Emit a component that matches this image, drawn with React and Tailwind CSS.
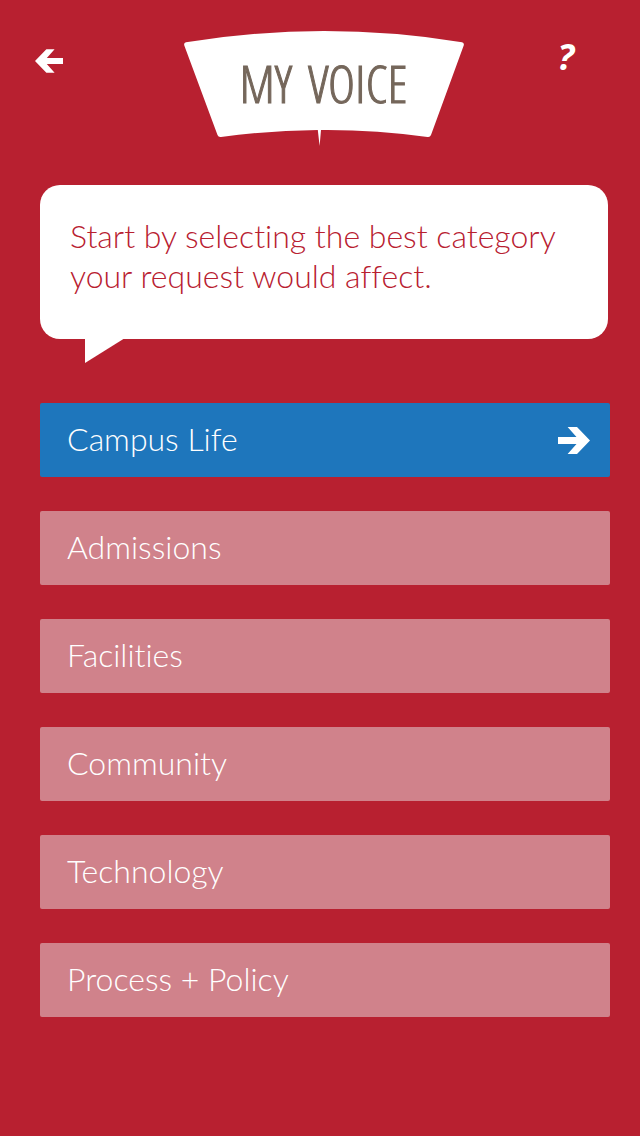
import React, { useState } from "react";

const categories = [
  "Campus Life",
  "Admissions",
  "Facilities",
  "Community",
  "Technology",
  "Process + Policy",
];

function Arrow({ className }) {
  return (
    <svg viewBox="0 0 32 27" className={className} fill="currentColor" aria-hidden="true">
      <path d="M0 10H18.500L9.6 0H19L32 13.5L19 27H9.6L18.500 17H0Z" />
    </svg>
  );
}

function Header() {
  return (
    <header className="grid grid-cols-[1fr_auto_1fr] items-start pl-[35px] pr-7 pt-[31px]">
      <button type="button" aria-label="Back" className="mt-[18px] w-7 text-white">
        <Arrow className="h-6 w-7 rotate-180" />
      </button>
      <div className="relative h-[116px] w-[280px]">
        <svg viewBox="0 0 280 116" className="h-full w-full" fill="#fff" aria-hidden="true">
          <path d="M2 11.2Q140 -11 278 11.2Q280.500 12 279.700 14.500L247 104Q246 106.500 243.500 106Q190 98.500 137 99L135.600 115L133.800 99Q85 99.500 37 106Q34.500 106.500 33.500 104L.3 14.500Q-.5 11.800 2 11.200Z" />
        </svg>
        <h1 className="absolute inset-x-0 top-[22px] flex justify-center gap-4 font-['Open_Sans_Condensed_Light','Roboto_Condensed_Light','Roboto_Condensed','Liberation_Sans_Narrow',sans-serif] text-[52px] font-light leading-[60px] text-[#75675b] [-webkit-text-stroke:1px_#75675b]">
          <span>MY</span> <span>VOICE</span>
        </h1>
      </div>
      <button
        type="button"
        aria-label="Help"
        className="mr-[38px] mt-1.5 justify-self-end font-['Open_Sans',sans-serif] text-4xl font-bold italic leading-[40px] text-white"
      >
        ?
      </button>
    </header>
  );
}

export default function App() {
  const [selected, setSelected] = useState("Campus Life");
  return (
    <div className="min-h-screen bg-[#b82030] font-[Lato,sans-serif]">
      <Header />
      <main className="pb-10 pl-10 pr-[30px] pt-[38px] [font-variant-ligatures:none]">
        <div className="relative mr-0.5 rounded-[20px] bg-white px-[30px] pb-[43px] pt-[31px]">
          <p className="text-[32px] font-light leading-[40px] text-[#b82030]">
            Start by selecting the best category your request would affect.
          </p>
          <svg
            viewBox="0 0 40 25"
            className="absolute left-[45px] top-full -mt-px h-[25px] w-10"
            fill="#fff"
            aria-hidden="true"
          >
            <path d="M0 0H40L0 25Z" />
          </svg>
        </div>
        <div className="mt-16 flex flex-col gap-[34px]">
          {categories.map((name) => {
            const active = name === selected;
            return (
              <button
                key={name}
                type="button"
                aria-pressed={active}
                onClick={() => setSelected(name)}
                className={`flex h-[74px] items-center justify-between rounded-xs pl-[27px] pr-5 text-left text-[32px] font-light text-white ${
                  active ? "bg-[#1e76bc]" : "bg-[#d0828b]"
                }`}
              >
                <span className="pb-0.5">{name}</span>
                {active && <Arrow className="h-[27px] w-8" />}
              </button>
            );
          })}
        </div>
      </main>
    </div>
  );
}
